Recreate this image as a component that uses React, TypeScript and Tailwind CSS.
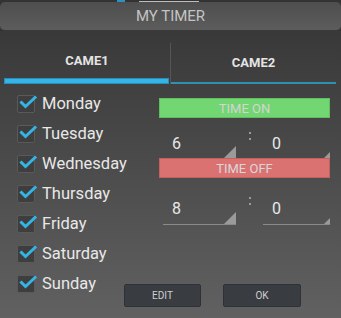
import React from 'react';

const days = ['Monday', 'Tuesday', 'Wednesday', 'Thursday', 'Friday', 'Saturday', 'Sunday'];

function CheckRow({ label }: { label: string }) {
  return (
    <div className="flex h-[30px] items-center whitespace-nowrap">
      <div className="relative h-[18px] w-[18px] shrink-0 rounded-[2px] border border-[#5a5a5a] bg-[#3e3e3e]">
        <svg viewBox="0 0 20 20" className="absolute -left-[1px] -top-[1px] h-[20px] w-[20px] overflow-visible">
          <path d="M4.5 7.5 L8.5 11.5 L18 2.5" fill="none" stroke="#33b5e5" strokeWidth="3" strokeLinecap="square" />
        </svg>
      </div>
      <span className="ml-[7px] text-[16.5px] leading-none text-[#e8e8e8]">{label}</span>
    </div>
  );
}

function Field({ value, width, tri, underline, mb }: { value: string; width: string; tri: string; underline: boolean; mb: string }) {
  return (
    <div className={`flex items-end justify-between ${width} ${underline ? 'border-b border-[#8a8a8a]' : ''}`}>
      <span className={`pl-[9px] text-[16px] leading-none text-[#e8e8e8] ${mb}`}>{value}</span>
      <div className={`${tri} bg-[#9a9a9a] [clip-path:polygon(100%_0,100%_100%,0_100%)]`} />
    </div>
  );
}

function Spinner({ h, first, second, underline, colonTop, mb }: { h: string; first: string; second: string; underline: boolean; colonTop: string; mb: string }) {
  return (
    <div className={`flex ${h} items-stretch pl-[4px]`}>
      <div className="flex items-end">
        <Field value={first} width="w-[73px]" tri="h-[12px] w-[12px]" underline={underline} mb={mb} />
      </div>
      <div className={`flex w-[27px] flex-col items-center gap-[4px] ${colonTop}`}>
        <div className="h-[2px] w-[2px] bg-[#9a9a9a]" />
        <div className="h-[2px] w-[2px] bg-[#9a9a9a]" />
      </div>
      <div className="flex items-end">
        <Field value={second} width="w-[67px]" tri="h-[6px] w-[6px]" underline={underline} mb={mb} />
      </div>
    </div>
  );
}

export default function App() {
  return (
    <div className="h-[318px] w-[341px] overflow-hidden bg-[#333] font-['Roboto',sans-serif]">
      {/* bottom edge of the screen behind the dialog */}
      <div className="flex h-[2px] items-end gap-[14px] pl-[117px]">
        <div className="h-[2px] w-[8px] bg-[#2f8fc0]" />
        <div className="h-[1px] w-[60px] bg-[#bdbdbd]" />
      </div>
      <div className="flex h-[29px] items-center justify-center rounded-[5px] border-b border-[#3a3a3a] bg-gradient-to-b from-[#4e4e4e] to-[#5c5c5c]">
        <span className="text-[15px] leading-none text-[#c4c4c4]">MY TIMER</span>
      </div>
      <div className="h-[287px] bg-gradient-to-b from-[#393939] to-[#616161]">
        {/* tabs */}
        <div className="flex h-[53px] pt-[12px]">
          <div className="flex w-[170px] flex-col pl-[4px]">
            <div className="flex flex-1 items-center justify-center pt-[1px] text-[13px] font-bold text-[#e4e4e4]">CAME1</div>
            <div className="h-[6px] w-[165px] border border-[#2a8db5] bg-[#35b5e5]" />
          </div>
          <div className="w-[1px] bg-[#555]" />
          <div className="flex w-[165px] flex-col">
            <div className="flex flex-1 items-center justify-center pt-[1px] text-[13px] font-bold text-[#e4e4e4]">CAME2</div>
            <div className="h-[2px] w-full bg-[#2f8fb5]" />
          </div>
        </div>
        {/* body */}
        <div className="flex">
          <div className="flex w-[124px] flex-col pl-[17px] pt-[5px]">
            {days.map((d) => (
              <CheckRow key={d} label={d} />
            ))}
          </div>
          <div className="flex flex-col">
            <div className="ml-[35px] flex w-[171px] flex-col pt-[14px]">
              <div className="flex h-[20px] items-center justify-center border border-[#5fbf5f] bg-[#72d672] text-[13px] leading-none text-[#d4d4d4]">
                TIME ON
              </div>
              <Spinner h="h-[40px]" first="6" second="0" underline={false} colonTop="pt-[14px]" mb="mb-[6px]" />
              <div className="flex h-[20px] items-center justify-center border border-[#c85f5f] bg-[#db7272] text-[13px] leading-none text-[#d8d8d8]">
                TIME OFF
              </div>
              <Spinner h="h-[47px]" first="8" second="0" underline={true} colonTop="pt-[19px]" mb="mb-[7px]" />
            </div>
            <div className="mt-[59px] flex gap-[22px]">
              <button className="flex h-[23px] w-[77px] items-center justify-center rounded-[2px] border border-[#2e3236] bg-[#393d42] text-[10px] text-[#d0d0d0]">
                EDIT
              </button>
              <button className="flex h-[23px] w-[78px] items-center justify-center rounded-[2px] border border-[#2e3236] bg-[#393d42] text-[10px] text-[#d0d0d0]">
                OK
              </button>
            </div>
          </div>
        </div>
      </div>
    </div>
  );
}
